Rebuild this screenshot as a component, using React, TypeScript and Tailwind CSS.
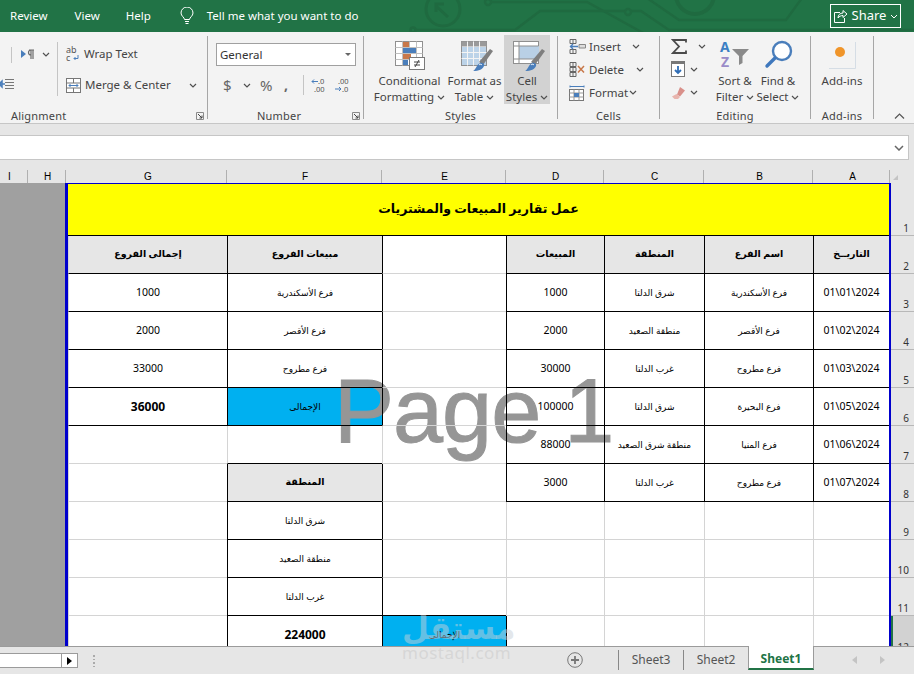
import React from "react";

const BLUE = "#4a7ebb";
const GRAY = "#6a6a6a";

const Chevron = ({ className = "" }: { className?: string }) => (
  <svg width="8" height="5" viewBox="0 0 8 5" className={className}>
    <path d="M1 1l3 3 3-3" fill="none" stroke="#505050" strokeWidth="1.2" />
  </svg>
);

const Launcher = () => (
  <svg width="8" height="8" viewBox="0 0 8 8" className="mr-[3px]">
    <path d="M.5 7.5v-7h7v7z" fill="none" stroke="#8a8a8a" />
    <path d="M2 2l4 4M3.5 6H6V3.5" fill="none" stroke="#444" />
  </svg>
);

const Separator = () => <div className="w-px my-1 bg-[#a6a6a6] shrink-0" />;

const TitleArt = () => (
  <svg width="914" height="32" viewBox="0 0 914 32" className="absolute left-0 top-0" fill="none" stroke="#1f6a40" strokeWidth="2.4">
    <circle cx="443" cy="9" r="17" strokeWidth="3" />
    <path d="M436 6l12 11M436 12V4h8" strokeWidth="3" />
    <circle cx="488" cy="2" r="3" />
    <path d="M491 2h96l58 32" />
    <circle cx="413" cy="30" r="2.5" />
    <path d="M416 30h99l25-19h85M631 11h10l28 19h245" />
    <circle cx="628" cy="12" r="3" />
    <circle cx="695" cy="-5" r="19" strokeWidth="4" />
    <path d="M647-2l32 22h107l16-22" />
  </svg>
);

const Bulb = () => (
  <svg width="14" height="18" viewBox="0 0 14 18" fill="none" stroke="#fff" strokeWidth="1">
    <path d="M4.5 12.500c0-2-3.500-3.500-3.500-6.500a6 6 0 0 1 12 0c0 3-3.500 4.500-3.500 6.500z" />
    <path d="M5 14.500h4M5.500 16.500h3" />
  </svg>
);

const ShareIcon = () => (
  <svg width="15" height="15" viewBox="0 0 15 15" fill="none" stroke="#fff" strokeWidth="1">
    <path d="M7 3.500H1.500v10h10V9" />
    <path d="M5 9c0-3 2-5 5-5V1.500L14 5l-4 3.500V6.500C8 6.500 6 7.500 5 9z" />
  </svg>
);

const ParaIcon = () => (
  <svg width="13" height="11" viewBox="0 0 13 11">
    <path d="M0 1l5 4-5 4z" fill={BLUE} />
    <path d="M8 1h5M10 1v9M12 1v9M10 1a2.500 2.500 0 0 0 0 5" fill="none" stroke={GRAY} strokeWidth="1.200" />
  </svg>
);

const WrapIcon = () => (
  <svg width="14" height="16" viewBox="0 0 14 16">
    <text x="0" y="7" fontSize="9" fontFamily="Noto Sans" fill="#555">ab</text>
    <text x="0" y="15" fontSize="9" fontFamily="Noto Sans" fill="#555">c</text>
    <path d="M12 9v3.500H8M9.500 11L8 12.500 9.500 14" fill="none" stroke={BLUE} />
  </svg>
);

const MergeIcon = () => (
  <svg width="15" height="15" viewBox="0 0 15 15" fill="none">
    <rect x=".5" y=".5" width="14" height="14" fill="#fff" stroke="#777" />
    <path d="M.5 5h14M.5 10h14M7.500.5V5M7.500 10v4.500" stroke="#777" />
    <path d="M3 7.500h9M4.500 6L3 7.500 4.500 9M10.500 6L12 7.500 10.500 9" stroke={BLUE} />
  </svg>
);

const IndentIcon = () => (
  <svg width="14" height="11" viewBox="0 0 14 11" fill="none">
    <path d="M5 .5h9M5 3.500h9M5 6.500h9M5 9.500h9" stroke="#777" />
    <path d="M0 5h5M-1 5l3-3v6z" stroke={BLUE} strokeWidth="1.500" />
  </svg>
);

const DecimalIcon = ({ flip }: { flip?: boolean }) => (
  <svg width="16" height="15" viewBox="0 0 16 15" fill="none">
    <text x={flip ? 3 : 7} y="6" fontSize="7.500" fontFamily="Noto Sans" fill="#555">{flip ? ".00" : ".0"}</text>
    <text x={flip ? 7 : 3} y="14" fontSize="7.500" fontFamily="Noto Sans" fill="#555">{flip ? ".0" : ".00"}</text>
    {flip ? (
      <path d="M0 11h6M4 9l2 2-2 2" stroke={BLUE} />
    ) : (
      <path d="M7 3.500H1M3 1.500l-2 2 2 2" stroke={BLUE} />
    )}
  </svg>
);

const CondIcon = () => (
  <svg width="32" height="30" viewBox="0 0 32 30">
    <rect x="1.500" y="1.500" width="27" height="24" fill="#fff" stroke="#8f8f8f" />
    <path d="M1.500 7.500h27M1.500 13.500h27M1.500 19.500h27M8.500 1.500v24M15.500 1.500v24M22.500 1.500v24" stroke="#c0c0c0" />
    <rect x="9" y="2" width="6" height="5" fill="#c8784a" />
    <rect x="9" y="8" width="13" height="5" fill={BLUE} />
    <rect x="9" y="14" width="8" height="5" fill="#c8784a" />
    <rect x="9" y="20" width="5" height="5" fill={BLUE} />
    <rect x="15.500" y="17.500" width="15" height="12" fill="#fff" stroke="#7a7a7a" />
    <path d="M20 22h6M20 25h6M25 20l-4 7" stroke="#444" fill="none" />
  </svg>
);

const Brush = () => (
  <g>
    <path d="M18 22l11-13 3 2-10 14z" fill="#7f7f7f" />
    <path d="M12 31c3-1 3-6 7-8 2-1 5 1 4 3-1 3-5 5-11 5z" fill={BLUE} />
    <path d="M18 25c1-1 2-1 3 0" stroke="#fff" fill="none" />
  </g>
);

const TableIcon = () => (
  <svg width="32" height="32" viewBox="0 0 32 32">
    <rect x=".5" y="1.500" width="25" height="24" fill="#fff" stroke="#8f8f8f" />
    <rect x=".5" y="1.500" width="25" height="5" fill="#9a9a9a" />
    <rect x="1" y="7" width="24" height="18" fill="#bcd3e8" />
    <path d="M.5 12.500h25M.5 18.500h25M6.500 1.500v24M12.500 1.500v24M18.500 1.500v24" stroke="#f4f4f4" />
    <Brush />
  </svg>
);

const StylesIcon = () => (
  <svg width="32" height="32" viewBox="0 0 32 32">
    <rect x=".5" y="1.500" width="25" height="22" fill="#fff" stroke="#8f8f8f" />
    <rect x="6" y="6" width="20" height="13" fill="#b9d0e6" />
    <path d="M.5 6h25M.5 19h25M6 1.500v22" stroke="#8f8f8f" />
    <Brush />
  </svg>
);

const InsertIcon = () => (
  <svg width="17" height="15" viewBox="0 0 17 15" fill="none">
    <path d="M1 .5h6v4H1zM1 10.500h6v4H1zM4 .5v4M4 10.500v4" stroke="#666" />
    <path d="M10 5.500h6.500v3.500H10z" stroke="#888" fill="#ddd" />
    <path d="M1 7.500h8M4 5L1.500 7.500 4 10" stroke={BLUE} strokeWidth="1.400" />
  </svg>
);

const DeleteIcon = () => (
  <svg width="17" height="15" viewBox="0 0 17 15" fill="none">
    <path d="M1 .5h6v4H1zM1 10.500h6v4H1zM1 5.500h6v4H1zM4 .5v14" stroke="#666" />
    <path d="M9 4l6 6.500M15 4l-6 6.500" stroke="#c8784a" strokeWidth="1.500" />
  </svg>
);

const FormatIcon = () => (
  <svg width="16" height="16" viewBox="0 0 16 16" fill="none">
    <path d="M1 1.500h14M1 .5v2M15 .5v2" stroke={BLUE} />
    <rect x=".5" y="4.500" width="14" height="11" fill="#fff" stroke="#777" />
    <path d="M.5 8h14M.5 12h14M5 4.500v11M10 4.500v11" stroke="#999" />
    <rect x="5" y="8" width="5" height="4" fill={BLUE} />
  </svg>
);

const SumIcon = () => (
  <svg width="16" height="15" viewBox="0 0 16 15" fill="none">
    <path d="M15 3.500V1H2l6 6.500L2 14h13v-2.500" stroke="#4a4a4a" strokeWidth="1.800" />
  </svg>
);

const FillIcon = () => (
  <svg width="15" height="16" viewBox="0 0 15 16" fill="none">
    <rect x=".5" y=".5" width="13" height="15" fill="#fff" stroke="#777" />
    <rect x="0" y="0" width="14" height="3" fill="#777" />
    <path d="M7 5v7M4 9l3 3 3-3" stroke="#2f6db5" strokeWidth="1.800" />
  </svg>
);

const EraserIcon = () => (
  <svg width="15" height="13" viewBox="0 0 15 13">
    <path d="M9 1l5 3.500-5 6-3-2z" fill="#d9908a" />
    <path d="M5.500 8L9 11l-2 2H3.500L1 10.500z" fill="#e8b5ae" />
  </svg>
);

const SortIcon = () => (
  <svg width="32" height="29" viewBox="0 0 32 29">
    <text x="1" y="12" fontSize="14" fontWeight="700" fontFamily="Noto Sans" fill="#3b7fc4">A</text>
    <text x="2" y="27" fontSize="14" fontWeight="700" fontFamily="Noto Sans" fill="#9a8bc8">Z</text>
    <path d="M13 9h17l-6.500 7v7l-3.500 2v-9z" fill="#8a8a8a" />
  </svg>
);

const SearchIcon = () => (
  <svg width="29" height="29" viewBox="0 0 29 29" fill="none">
    <circle cx="18" cy="11" r="9" stroke={BLUE} strokeWidth="2.400" fill="#fff" />
    <path d="M11 18L3 26" stroke="#3f78bd" strokeWidth="3.400" strokeLinecap="round" />
  </svg>
);

const AddinsIcon = () => (
  <svg width="30" height="30" viewBox="0 0 30 30" fill="none">
    <path d="M28.500 2v26.500H2" stroke="#d5dde5" />
    <circle cx="13" cy="12" r="5" fill="#f0952a" />
  </svg>
);

type GroupProps = { width: string; label: string; children: React.ReactNode; labelClass?: string; launcher?: boolean };

const Group = ({ width, label, children, labelClass = "justify-center", launcher }: GroupProps) => (
  <div className={`flex flex-col shrink-0 ${width}`}>
    <div className="flex-1 min-h-0">{children}</div>
    <div className={`flex items-center h-[16px] pt-[2px] text-[11px] text-[#444] tracking-[0.2px] ${launcher ? "justify-between" : labelClass}`}>
      <span className={labelClass}>{label}</span>
      {launcher && <Launcher />}
    </div>
  </div>
);

const BigButton = ({ icon, lines, width, active, iconClass = "" }: { icon: React.ReactNode; lines: React.ReactNode[]; width: string; active?: boolean; iconClass?: string }) => (
  <div className={`flex flex-col items-center h-[69px] mt-[3px] pt-[5px] shrink-0 ${width} ${active ? "bg-[#d2d2d2]" : ""}`}>
    <div className={`h-[33px] shrink-0 flex items-start justify-center ${iconClass}`}>{icon}</div>
    {lines.map((l, i) => (
      <div key={i} className="h-[16px] shrink-0 leading-[16px] text-[11.500px] text-[#444] whitespace-nowrap flex items-center gap-[3px]">
        {l}
      </div>
    ))}
  </div>
);

const CellsRow = ({ icon, label, gap }: { icon: React.ReactNode; label: string; gap: string }) => (
  <div className={`flex items-center h-[23px] pl-[11px] text-[11.500px] text-[#444]`}>
    <div className="w-[20px] flex items-center">{icon}</div>
    <span>{label}</span>
    <Chevron className={gap} />
  </div>
);

const Ribbon = () => (
  <div className="flex h-[92px] bg-[#f3f3f3] border-b border-[#c6c6c6]">
    <Group width="w-[207px]" label="Alignment" launcher labelClass="pl-[11px]">
      <div className="flex h-[76px]">
        <div className="w-[57px] flex flex-col">
          <div className="h-[45px] flex items-center">
            <div className="w-px h-[16px] bg-[#c4c4c4] ml-[11px] mr-[9px]" />
            <ParaIcon />
            <Chevron className="ml-[8px]" />
          </div>
          <div className="pt-[2px]"><IndentIcon /></div>
        </div>
        <div className="w-px h-[54px] mt-[10px] bg-[#c4c4c4]" />
        <div className="flex flex-col pl-[8px] text-[11.500px] text-[#444]">
          <div className="flex items-center h-[16px] mt-[14px] gap-[4px]"><WrapIcon /><span>Wrap Text</span></div>
          <div className="flex items-center h-[16px] mt-[15px] gap-[4px]"><MergeIcon /><span>Merge &amp; Center</span><Chevron className="ml-[14px]" /></div>
        </div>
      </div>
    </Group>
    <Separator />
    <Group width="w-[155px]" label="Number" launcher labelClass="pl-[49px]">
      <div className="pl-[8px] pt-[11px]">
        <div className="flex items-center justify-between w-[140px] h-[23px] bg-white border border-[#a0a0a0] pl-[3px] pr-[4px] text-[11.500px] text-[#333]">
          <span>General</span>
          <span className="w-0 h-0 border-x-[3px] border-x-transparent border-t-[3px] border-t-[#666]" />
        </div>
        <div className="flex items-center h-[18px] mt-[10px] pl-[7px] text-[#666]">
          <span className="text-[15px] w-[20px] leading-none">$</span>
          <Chevron />
          <span className="text-[15px] ml-[9px] w-[24px] leading-none">%</span>
          <span className="text-[14px] font-bold w-[19px] leading-none">,</span>
          <div className="w-px h-[20px] bg-[#c4c4c4] mr-[7px]" />
          <DecimalIcon />
          <div className="w-[8px]" />
          <DecimalIcon flip />
        </div>
      </div>
    </Group>
    <Separator />
    <Group width="w-[193px]" label="Styles">
      <div className="flex pl-[10px]">
        <BigButton width="w-[71px]" icon={<CondIcon />} lines={["Conditional", <>Formatting <Chevron /></>]} />
        <BigButton width="w-[59px]" icon={<TableIcon />} lines={["Format as", <>Table <Chevron /></>]} iconClass="pl-[4px]" />
        <BigButton width="w-[46px]" active icon={<StylesIcon />} lines={["Cell", <>Styles <Chevron /></>]} iconClass="pl-[4px]" />
      </div>
    </Group>
    <Separator />
    <Group width="w-[101px]" label="Cells">
      <div className="pt-[3px]">
        <CellsRow icon={<InsertIcon />} label="Insert" gap="ml-[11px]" />
        <CellsRow icon={<DeleteIcon />} label="Delete" gap="ml-[12px]" />
        <CellsRow icon={<FormatIcon />} label="Format" gap="ml-[1px]" />
      </div>
    </Group>
    <Separator />
    <Group width="w-[150px]" label="Editing">
      <div className="flex">
        <div className="w-[54px] pl-[11px] pt-[5px] flex flex-col">
          <div className="flex items-center h-[18px]"><SumIcon /><Chevron className="ml-[11px]" /></div>
          <div className="flex items-center h-[18px] mt-[5px]"><FillIcon /><Chevron className="ml-[4px]" /></div>
          <div className="flex items-center h-[18px] mt-[5px]"><EraserIcon /><Chevron className="ml-[4px]" /></div>
        </div>
        <BigButton width="w-[42px]" icon={<SortIcon />} lines={["Sort &", <>Filter <Chevron /></>]} />
        <BigButton width="w-[44px]" icon={<SearchIcon />} lines={["Find &", <>Select <Chevron /></>]} />
      </div>
    </Group>
    <Separator />
    <Group width="w-[62px]" label="Add-ins">
      <BigButton width="w-full" icon={<AddinsIcon />} lines={["Add-ins"]} />
    </Group>
    <Separator />
    <div className="flex-1 flex items-end justify-end pr-[9px] pb-[4px]">
      <svg width="11" height="6" viewBox="0 0 11 6"><path d="M1 5.500l4.500-4.500 4.500 4.500" fill="none" stroke="#555" strokeWidth="1.200" /></svg>
    </div>
  </div>
);

const COLUMNS = [
  ["I", "w-[28px] pr-[8px]"],
  ["H", "w-[38px] pl-[2px]"],
  ["G", "w-[161px] pl-[4px]"],
  ["F", "w-[155px] pl-[2px]"],
  ["E", "w-[124px] pl-[2px]"],
  ["D", "w-[98px] pl-[2px]"],
  ["C", "w-[100px] pl-[2px]"],
  ["B", "w-[109px] pl-[3px]"],
  ["A", "w-[77px] pl-[3px]"],
];

type Cell = { t?: string; bold?: boolean; fill?: "head" | "blue"; black?: boolean };

const T = (t: string): Cell => ({ t, black: true });
const H = (t: string): Cell => ({ t, bold: true, fill: "head", black: true });
const E: Cell = {};
const SHEET: Cell[][] = [
  [H("إجمالى الفروع"), H("مبيعات الفروع"), E, H("المبيعات"), H("المنطقة"), H("اسم الفرع"), H("التاريــخ")],
  [T("1000"), T("فرع الأسكندرية"), E, T("1000"), T("شرق الدلتا"), T("فرع الأسكندرية"), T("01\\01\\2024")],
  [T("2000"), T("فرع الأقصر"), E, T("2000"), T("منطقة الصعيد"), T("فرع الأقصر"), T("01\\02\\2024")],
  [T("33000"), T("فرع مطروح"), E, T("30000"), T("غرب الدلتا"), T("فرع مطروح"), T("01\\03\\2024")],
  [{ t: "36000", bold: true, black: true }, { t: "الإجمالى", fill: "blue", black: true }, E, T("100000"), T("شرق الدلتا"), T("فرع البحيرة"), T("01\\05\\2024")],
  [E, E, E, T("88000"), T("منطقة شرق الصعيد"), T("فرع المنيا"), T("01\\06\\2024")],
  [E, H("المنطقة"), E, T("3000"), T("غرب الدلتا"), T("فرع مطروح"), T("01\\07\\2024")],
  [E, T("شرق الدلتا"), E, E, E, E, E],
  [E, T("منطقة الصعيد"), E, E, E, E, E],
  [E, T("غرب الدلتا"), E, E, E, E, E],
  [E, { t: "224000", bold: true, black: true }, { t: "الإجمالى", fill: "blue", black: true }, E, E, E, E],
];

const SheetCell = ({ cell, left, bottom }: { cell: Cell; left: boolean; bottom: boolean }) => {
  const numeric = /^[0-9\\]+$/.test(cell.t ?? "");
  const size = cell.bold ? (numeric ? "text-[12px] font-bold" : "text-[9.500px] font-bold") : numeric ? "text-[10.500px]" : "text-[9px]";
  return (
    <div className={cell.fill === "head" ? "bg-[#e6e6e6]" : cell.fill === "blue" ? "bg-[#00b0f0]" : ""}>
      <div
        className={`relative z-10 h-[38px] flex items-center justify-center border-l border-b text-black ${size} ${left ? "border-l-black" : "border-l-[#d4d4d4]"} ${bottom ? "border-b-black" : "border-b-[#d4d4d4]"}`}
      >
        <span dir="auto">{cell.t}</span>
      </div>
    </div>
  );
};

const Grid = () => (
  <div className="relative w-[821px] grid grid-cols-[159px_155px_124px_98px_100px_109px_76px] content-start">
    <div className="col-span-7 h-[52px] bg-[#ffff00] border-b border-black flex items-center justify-center text-[12.500px] font-bold text-black">
      <span dir="rtl">عمل تقارير المبيعات والمشتريات</span>
    </div>
    {SHEET.flatMap((row, r) =>
      row.map((cell, c) => (
        <SheetCell
          key={`${r}-${c}`}
          cell={cell}
          left={c > 0 && (!!cell.black || !!row[c - 1].black)}
          bottom={!!cell.black || !!SHEET[r + 1]?.[c].black}
        />
      ))
    )}
    <div className="absolute left-[266px] top-[182px] z-[5] text-[90px] leading-none tracking-[-1px] text-[#969696] [-webkit-text-stroke:1px_#969696] font-['Liberation_Sans'] whitespace-nowrap pointer-events-none">
      Page 1
    </div>
  </div>
);

const ROW_HEIGHTS = ["h-[53px]", ...Array(10).fill("h-[38px]")];

const RowHeaders = () => (
  <div className="w-[23px] bg-[#e6e6e6] text-[10px] text-[#333] flex flex-col">
    {ROW_HEIGHTS.map((h, i) => (
      <div key={i} className={`${h} shrink-0 border-b border-[#b8b8b8] flex items-end justify-end pr-[5px] leading-[13px]`}>
        {i + 1}
      </div>
    ))}
    <div className="h-[38px] shrink-0 bg-[#d2d2d2] border-l-2 border-[#217346] flex items-end justify-end pr-[5px] leading-[13px]">12</div>
  </div>
);

const Footer = () => (
  <div className="h-[28px] shrink-0 bg-[#e6e6e6] border-t border-[#9b9b9b] flex text-[12px] text-[#555]">
    <div className="flex items-center h-[15px] mt-[6px] border border-[#9b9b9b] border-l-0 bg-white w-[78px]">
      <div className="w-[62px] h-full border-r border-[#9b9b9b]" />
      <div className="flex-1 flex justify-center">
        <span className="w-0 h-0 border-y-[4px] border-y-transparent border-l-[5px] border-l-black" />
      </div>
    </div>
    <div className="flex flex-col gap-[2px] ml-[15px] mt-[8px] h-[12px]">
      <span className="w-[2px] h-[2px] bg-[#aaa]" />
      <span className="w-[2px] h-[2px] bg-[#aaa]" />
      <span className="w-[2px] h-[2px] bg-[#aaa]" />
      <span className="w-[2px] h-[2px] bg-[#aaa]" />
    </div>
    <div className="ml-[472px] mt-[5px]">
      <svg width="16" height="16" viewBox="0 0 16 16" fill="none" stroke="#777">
        <circle cx="8" cy="8" r="7.300" />
        <path d="M8 4v8M4 8h8" strokeWidth="1.800" />
      </svg>
    </div>
    <div className="w-px h-[20px] mt-[3px] ml-[35px] bg-[#888]" />
    <div className="w-[64px] text-center leading-[26px]">Sheet3</div>
    <div className="w-px h-[20px] mt-[3px] bg-[#888]" />
    <div className="w-[64px] text-center leading-[26px]">Sheet2</div>
    <div className="w-[66px] h-[24px] -mt-px bg-white border-x border-[#9b9b9b] border-b-2 border-b-[#217346] text-center font-bold text-[#217346] leading-[26px]">Sheet1</div>
    <div className="flex items-center h-[26px] ml-[38px] gap-[23px]">
      <span className="w-0 h-0 border-y-[4px] border-y-transparent border-r-[5px] border-r-[#c4c4c4]" />
      <span className="w-0 h-0 border-y-[4px] border-y-transparent border-l-[5px] border-l-[#c4c4c4]" />
    </div>
  </div>
);

export default function App() {
  return (
    <div className="relative w-[914px] h-[674px] overflow-hidden flex flex-col bg-[#e6e6e6] font-['Noto_Sans','DejaVu_Sans',sans-serif]">
      <div className="relative h-[32px] bg-[#217346] text-white text-[11.500px] flex items-center shrink-0">
        <TitleArt />
        <div className="relative flex items-center w-full">
          <span className="ml-[10px]">Review</span>
          <span className="ml-[27px]">View</span>
          <span className="ml-[26px]">Help</span>
          <span className="ml-[29px]"><Bulb /></span>
          <span className="ml-[13px]">Tell me what you want to do</span>
          <div className="ml-auto mr-[13px] w-[71px] h-[24px] border border-white flex items-center justify-center gap-[4px]">
            <ShareIcon />
            <span className="text-[13px]">Share</span>
            <svg width="8" height="5" viewBox="0 0 8 5"><path d="M1 1l3 3 3-3" fill="none" stroke="#fff" /></svg>
          </div>
        </div>
      </div>
      <Ribbon />
      <div className="h-[11px] shrink-0" />
      <div className="h-[25px] shrink-0 w-[909px] bg-white border-y border-r border-[#c6c6c6] flex items-center justify-end pr-[4px]">
        <svg width="10" height="6" viewBox="0 0 10 6"><path d="M1 1l4 4 4-4" fill="none" stroke="#666" strokeWidth="1.500" /></svg>
      </div>
      <div className="h-[10px] shrink-0" />
      <div className="flex h-[13px] shrink-0 bg-[#e6e6e6] text-[10px] text-black leading-[13px]">
        {COLUMNS.map(([name, w]) => (
          <div key={name} className={`${w} text-center border-r border-[#b0b0b0] font-['Liberation_Sans']`}>{name}</div>
        ))}
        <div className="flex-1 flex items-end pl-[3px] pb-[3px]">
          <span className="w-0 h-0 border-l-[5px] border-l-transparent border-b-[5px] border-b-[#c4c4c4]" />
        </div>
      </div>
      <div className="flex h-[463px] shrink-0 overflow-hidden">
        <div className="w-[65px] bg-[#a0a0a0] shrink-0" />
        <div className="flex border-l-[3px] border-r-2 border-t border-[#0000cc] bg-white h-[463px]">
          <Grid />
        </div>
        <RowHeaders />
      </div>
      <Footer />
      <div className="absolute left-[402px] top-[601px] z-20 text-[31px] leading-[52px] font-bold text-[#c8d0d8]/50 pointer-events-none" dir="rtl">مستقل</div>
      <div className="absolute left-[402px] top-[644px] z-20 text-[17px] leading-[18px] tracking-[0.5px] text-[#d6d6d6] pointer-events-none">mostaql.com</div>
    </div>
  );
}
